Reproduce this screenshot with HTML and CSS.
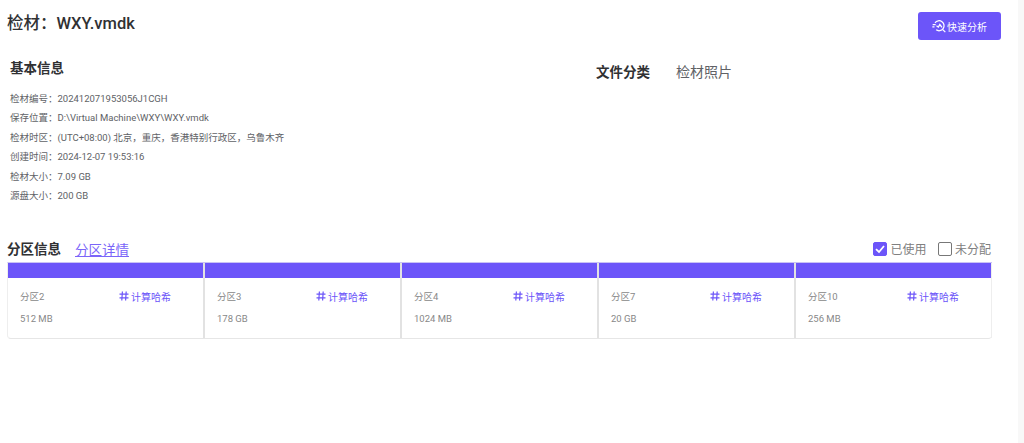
FILE: index.html
```html
<!DOCTYPE html>
<html lang="zh-CN">
<head>
    <meta charset="UTF-8">
    <title>检材</title>
    <link rel="stylesheet" href="styles.css">
</head>
<body>
    <div class="page">
        <div class="header">
            <h1>检材：WXY.vmdk</h1>
            <button class="quick-btn">
                <svg width="15" height="15" viewBox="0 0 18 18" fill="none" stroke="white" stroke-width="1.5">
                    <path d="M3.6 4.6A6 6 0 1 1 5 13"/>
                    <path d="M0.8 6.6H4.4M0.4 9.4H3"/>
                    <path d="M5.4 8.2L7.6 9.8L9.4 6.6L12 10"/>
                    <path d="M12.6 12.4L16 15.8"/>
                </svg>
                快速分析
            </button>
        </div>

        <div class="info-row">
            <div class="basic">
                <h2>基本信息</h2>
                <ul class="info-list">
                    <li>检材编号：202412071953056J1CGH</li>
                    <li>保存位置：D:\Virtual Machine\WXY\WXY.vmdk</li>
                    <li>检材时区：(UTC+08:00) 北京，重庆，香港特别行政区，乌鲁木齐</li>
                    <li>创建时间：2024-12-07 19:53:16</li>
                    <li>检材大小：7.09 GB</li>
                    <li>源盘大小：200 GB</li>
                </ul>
            </div>
            <div class="tabs">
                <span class="tab active">文件分类</span>
                <span class="tab">检材照片</span>
            </div>
        </div>

        <div class="part-head">
            <div class="part-title">
                <h2>分区信息</h2>
                <a class="part-link" href="#">分区详情</a>
            </div>
            <div class="legend">
                <span class="legend-item">
                    <span class="box checked">
                        <svg width="12" height="12" viewBox="0 0 12 12" fill="none" stroke="white" stroke-width="1.8"><path d="M2 6.2L5 9L10 3"/></svg>
                    </span>
                    已使用
                </span>
                <span class="legend-item">
                    <span class="box"></span>
                    未分配
                </span>
            </div>
        </div>

        <div class="parts">
            <div class="part">
                <div class="part-bar"></div>
                <div class="part-body">
                    <div class="part-line">
                        <span>分区2</span>
                        <span class="hash"><svg width="10" height="10" viewBox="0 0 10 10" fill="none" stroke="#6c55f9" stroke-width="1.2"><path d="M3.4 0.5L2.8 9.5M7.2 0.5L6.6 9.5M0.5 3.2H9.5M0.5 6.8H9.5"/></svg>计算哈希</span>
                    </div>
                    <div class="part-size">512 MB</div>
                </div>
            </div>
            <div class="part">
                <div class="part-bar"></div>
                <div class="part-body">
                    <div class="part-line">
                        <span>分区3</span>
                        <span class="hash"><svg width="10" height="10" viewBox="0 0 10 10" fill="none" stroke="#6c55f9" stroke-width="1.2"><path d="M3.4 0.5L2.8 9.5M7.2 0.5L6.6 9.5M0.5 3.2H9.5M0.5 6.8H9.5"/></svg>计算哈希</span>
                    </div>
                    <div class="part-size">178 GB</div>
                </div>
            </div>
            <div class="part">
                <div class="part-bar"></div>
                <div class="part-body">
                    <div class="part-line">
                        <span>分区4</span>
                        <span class="hash"><svg width="10" height="10" viewBox="0 0 10 10" fill="none" stroke="#6c55f9" stroke-width="1.2"><path d="M3.4 0.5L2.8 9.5M7.2 0.5L6.6 9.5M0.5 3.2H9.5M0.5 6.8H9.5"/></svg>计算哈希</span>
                    </div>
                    <div class="part-size">1024 MB</div>
                </div>
            </div>
            <div class="part">
                <div class="part-bar"></div>
                <div class="part-body">
                    <div class="part-line">
                        <span>分区7</span>
                        <span class="hash"><svg width="10" height="10" viewBox="0 0 10 10" fill="none" stroke="#6c55f9" stroke-width="1.2"><path d="M3.4 0.5L2.8 9.5M7.2 0.5L6.6 9.5M0.5 3.2H9.5M0.5 6.8H9.5"/></svg>计算哈希</span>
                    </div>
                    <div class="part-size">20 GB</div>
                </div>
            </div>
            <div class="part">
                <div class="part-bar"></div>
                <div class="part-body">
                    <div class="part-line">
                        <span>分区10</span>
                        <span class="hash"><svg width="10" height="10" viewBox="0 0 10 10" fill="none" stroke="#6c55f9" stroke-width="1.2"><path d="M3.4 0.5L2.8 9.5M7.2 0.5L6.6 9.5M0.5 3.2H9.5M0.5 6.8H9.5"/></svg>计算哈希</span>
                    </div>
                    <div class="part-size">256 MB</div>
                </div>
            </div>
        </div>
    </div>
</body>
</html>
```

FILE: styles.css
```css
html, body {
    margin: 0;
    padding: 0;
    height: 100%;
    overflow: hidden;
}
body {
    font-family: Roboto, "Noto Sans CJK SC", sans-serif;
    background-color: #f8f8f8;
    color: #333;
}
h1, h2 {
    margin: 0;
}
.page {
    width: 1018px;
    height: 100%;
    box-sizing: border-box;
    background-color: white;
    padding: 12px 17px 0 7px;
}
.header {
    display: flex;
    justify-content: space-between;
    align-items: flex-start;
    height: 28px;
}
.header h1 {
    font-size: 16.5px;
    font-weight: 500;
    line-height: 23px;
    color: #303133;
}
.quick-btn {
    display: flex;
    align-items: center;
    justify-content: center;
    width: 83px;
    height: 28px;
    padding: 0;
    background-color: #6c55f9;
    border: none;
    border-radius: 3px;
    color: white;
    font-family: inherit;
    font-size: 10px;
}
.info-row {
    display: flex;
    margin-top: 19px;
    height: 162px;
}
.basic {
    width: 589px;
    padding-left: 3px;
    box-sizing: border-box;
}
.basic h2, .part-title h2 {
    font-size: 13.5px;
    font-weight: 700;
    line-height: 18px;
    color: #303133;
}
.info-list {
    list-style: none;
    margin: 12px 0 0;
    padding: 0;
    font-size: 9.5px;
    color: #606266;
}
.info-list li {
    height: 19.4px;
    line-height: 19.4px;
    white-space: nowrap;
}
.tabs {
    display: flex;
    gap: 26px;
    padding-top: 4px;
}
.tab {
    font-size: 14px;
    line-height: 18px;
    color: #606266;
}
.tab.active {
    font-size: 13.5px;
    font-weight: 700;
    color: #303133;
}
.part-head {
    display: flex;
    justify-content: space-between;
    align-items: center;
    margin-top: 17px;
    height: 21px;
}
.part-title {
    display: flex;
    align-items: center;
    gap: 14px;
}
.part-link {
    margin-top: 2px;
    font-size: 13.5px;
    line-height: 18px;
    color: #7a65f9;
}
.legend {
    display: flex;
    gap: 11.5px;
    margin-right: 10px;
}
.legend-item {
    display: flex;
    align-items: center;
    gap: 3px;
    font-size: 12px;
    color: #808080;
}
.box {
    display: flex;
    align-items: center;
    justify-content: center;
    width: 14px;
    height: 14px;
    box-sizing: border-box;
    border: 1.5px solid #777;
    border-radius: 2px;
}
.box.checked {
    background-color: #6c55f9;
    border-color: #6c55f9;
}
.parts {
    display: flex;
    width: 985px;
    margin-top: 3px;
    border-top: 1px solid #c9c2f5;
    border-bottom: 1px solid #e6e6e6;
    border-left: 1px solid #eee;
    box-sizing: border-box;
    border-radius: 0 0 4px 4px;
}
.part {
    flex: 1;
    border-right: 2px solid #e2e2e2;
}
.part:last-child {
    border-right: 1px solid #eee;
}
.part-bar {
    height: 15px;
    background-color: #6c55f9;
}
.part-body {
    height: 60px;
    padding: 12px 32px 0 12px;
    box-sizing: border-box;
    font-size: 9.5px;
    color: #888;
}
.part-line {
    display: flex;
    justify-content: space-between;
    align-items: center;
    height: 12px;
}
.part-size {
    margin-top: 11px;
    line-height: 12px;
}
.hash {
    display: flex;
    align-items: center;
    gap: 2px;
    font-size: 10px;
    color: #6c55f9;
}
```
